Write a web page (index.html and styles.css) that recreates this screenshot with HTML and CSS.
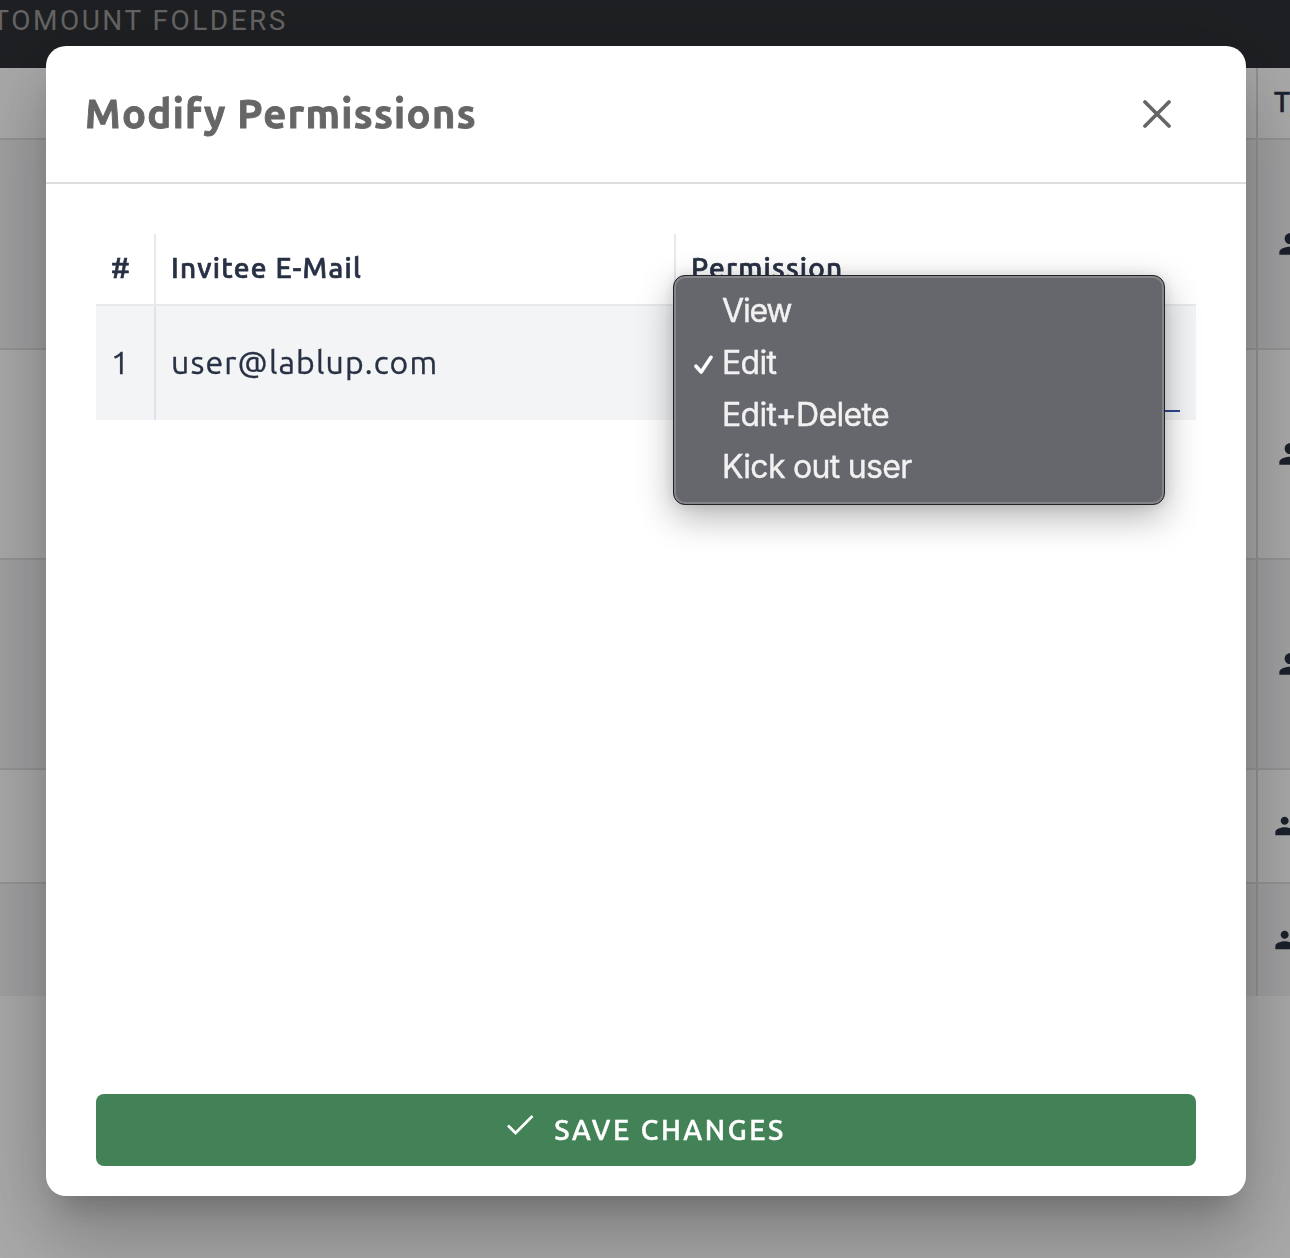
FILE: index.html
```
<!DOCTYPE html>
<html lang="en">
<head>
<meta charset="utf-8">
<title>Modify Permissions</title>
<link rel="stylesheet" href="styles.css">
</head>
<body>
<svg class="defs" width="0" height="0" aria-hidden="true">
  <symbol id="person" viewBox="0 0 24 24"><path d="M12 12c2.21 0 4-1.79 4-4s-1.79-4-4-4-4 1.79-4 4 1.79 4 4 4zm0 2c-2.67 0-8 1.34-8 4v2h16v-2c0-2.66-5.33-4-8-4z"/></symbol>
  <symbol id="group" viewBox="0 0 24 24"><path d="M16 11c1.66 0 2.99-1.34 2.99-3S17.66 5 16 5s-3 1.34-3 3 1.34 3 3 3zm-8 0c1.66 0 2.99-1.34 2.99-3S9.66 5 8 5 5 6.34 5 8s1.34 3 3 3zm0 2c-2.33 0-7 1.17-7 3.5V19h14v-2.5c0-2.33-4.67-3.5-7-3.5zm8 0c-.29 0-.62.02-.97.05 1.16.84 1.97 1.97 1.97 3.45V19h6v-2.5c0-2.33-4.67-3.5-7-3.5z"/></symbol>
</svg>
<div class="page">
  <nav class="tabs"><span class="tab">AUTOMOUNT FOLDERS</span></nav>
  <div class="folders">
    <div class="folder-row folder-head"><div></div><div class="folder-type">Type</div></div>
    <div class="folder-row tall striped"><div></div><div class="folder-type"><svg><use href="#person"/></svg></div></div>
    <div class="folder-row tall"><div></div><div class="folder-type"><svg><use href="#person"/></svg></div></div>
    <div class="folder-row tall striped"><div></div><div class="folder-type"><svg><use href="#person"/></svg></div></div>
    <div class="folder-row"><div></div><div class="folder-type"><svg><use href="#group"/></svg></div></div>
    <div class="folder-row striped last"><div></div><div class="folder-type"><svg><use href="#group"/></svg></div></div>
  </div>
</div>
<div class="scrim">
  <section class="dialog" role="dialog">
    <header class="dialog-header">
      <h1 class="dialog-title">Modify Permissions</h1>
      <svg class="close" viewBox="0 0 32 32"><path d="M4 4L28 28M28 4L4 28"/></svg>
    </header>
    <div class="dialog-body">
      <div class="grid">
        <div class="cell head">#</div>
        <div class="cell head">Invitee E-Mail</div>
        <div class="cell head">Permission</div>
        <div class="cell number">1</div>
        <div class="cell email">user@lablup.com</div>
        <div class="cell select-cell">
          <div class="select"></div>
          <ul class="menu">
            <li><span class="view">View</span></li>
            <li><svg class="tick" viewBox="0 0 20 20"><path d="M2 11.2L7.2 17L17 2.3"/></svg><span>Edit</span></li>
            <li><span>Edit+Delete</span></li>
            <li><span>Kick out user</span></li>
          </ul>
        </div>
      </div>
    </div>
    <footer class="dialog-footer">
      <button class="save"><svg class="check" viewBox="0 0 28 22"><path d="M2 11.5L9.5 19L26.5 2"/></svg><span class="save-label">SAVE CHANGES</span></button>
    </footer>
  </section>
</div>
</body>
</html>
```
FILE: styles.css
```
* { box-sizing: border-box; }
html, body { margin: 0; height: 1258px; overflow: hidden; }
body { font-family: Ubuntu, "Noto Sans", sans-serif; color: #283144; background: #fafafa; }
.defs { position: absolute; }
.page { height: 1258px; overflow: hidden; }
.tabs { display: flex; justify-content: flex-end; width: 100%; height: 68px; padding: 1px 1002px 0 0; background: #2d2f33; color: #949494; }
.tab { flex: none; font: 400 28px/40px Roboto, sans-serif; letter-spacing: 2.5px; white-space: nowrap; }
.folders { width: 1310px; }
.folder-row { display: grid; grid-template-columns: 1258px 1fr; height: 114px; border-bottom: 2px solid #dbdcdf; }
.folder-row > div:first-child { border-right: 2px solid #d6d7da; }
.folder-head { height: 72px; }
.tall { height: 210px; }
.striped { background: #eeeef0; }
.last { height: 112px; border-bottom: 0; }
.folder-type { display: flex; align-items: center; padding-left: 16px; font-size: 28px; font-weight: 500; letter-spacing: 1.2px; -webkit-text-stroke: .5px; }
.folder-head .folder-type { padding-bottom: 4px; }
.folder-type svg { flex: none; width: 32px; height: 32px; fill: #283040; }

.scrim { position: fixed; inset: 0; padding: 46px 44px 62px 46px; background: rgba(0, 0, 0, .32); }
.dialog { display: flex; flex-direction: column; height: 1150px; background: #fff; border-radius: 20px; box-shadow: 0 48px 76px 6px rgba(0, 0, 0, .14), 0 18px 92px 16px rgba(0, 0, 0, .12), 0 22px 30px -14px rgba(0, 0, 0, .2); }
.dialog-header { display: flex; align-items: center; justify-content: space-between; height: 138px; padding: 0 73px 0 39px; border-bottom: 2px solid #ddd; color: #666; }
.dialog-title { margin: 0; font-size: 40px; line-height: 56px; letter-spacing: 1.33px; white-space: nowrap; -webkit-text-stroke: .9px; }
.close { width: 32px; height: 32px; fill: none; stroke: #666; stroke-width: 3.7; stroke-linecap: round; }
.dialog-body { flex: 1; padding: 50px 50px 0; }
.grid { display: grid; grid-template-columns: 60px 520px 520px; grid-template-rows: 72px 114px; }
.cell { display: flex; align-items: center; padding: 0 15px; border-right: 2px solid #dfe2e8; background: #f3f4f6; font-size: 32px; white-space: nowrap; -webkit-text-stroke: .35px; }
.cell:nth-child(3n) { border-right: 0; }
.head { background: #fff; border-color: #e7e9ec; border-bottom: 2px solid #e7e9ec; font-size: 28px; font-weight: 500; padding-bottom: 4px; letter-spacing: 1.25px; -webkit-text-stroke: .7px; }
.email { letter-spacing: 1.15px; }
.number, .email { padding-bottom: 2px; }
.select-cell { position: relative; align-items: stretch; padding: 0 16px; }
.select { flex: 1; height: 106px; border-bottom: 2px solid #2f4990; }
.menu { position: absolute; left: -3px; top: -31px; width: 492px; height: 230px; margin: 0; padding: 9px 0 0; list-style: none; border: 1px solid #222326; border-radius: 12px; background: #66676c; box-shadow: inset 0 0 0 2px #858589, 0 12px 36px rgba(0, 0, 0, .3), 0 0 12px rgba(0, 0, 0, .1); color: #f1f1f2; font: 400 32px/52px Inter, sans-serif; letter-spacing: -.7px; -webkit-text-stroke: .4px; }
.menu li { display: grid; grid-template-columns: 29px 1fr; height: 52px; padding-left: 19px; align-items: center; }
.menu span { grid-column: 2; }
.menu .view { letter-spacing: -1.2px; }
.tick { width: 20px; height: 20px; grid-column: 1; grid-row: 1; margin: 4px 0 0 1px; fill: none; stroke: #fff; stroke-width: 3.6; stroke-linecap: round; stroke-linejoin: round; }
.dialog-footer { padding: 0 50px 30px; }
.save { display: flex; align-items: center; justify-content: center; width: 100%; height: 72px; padding: 0; border: 0; border-radius: 8px; background: #438256; color: #fff; font: 500 28px/40px Ubuntu, "Noto Sans", sans-serif; letter-spacing: 2.6px; -webkit-text-stroke: .5px; }
.check { width: 28px; height: 22px; margin: 0 20px 11px 0; fill: none; stroke: #fff; stroke-width: 2.7; }
```
